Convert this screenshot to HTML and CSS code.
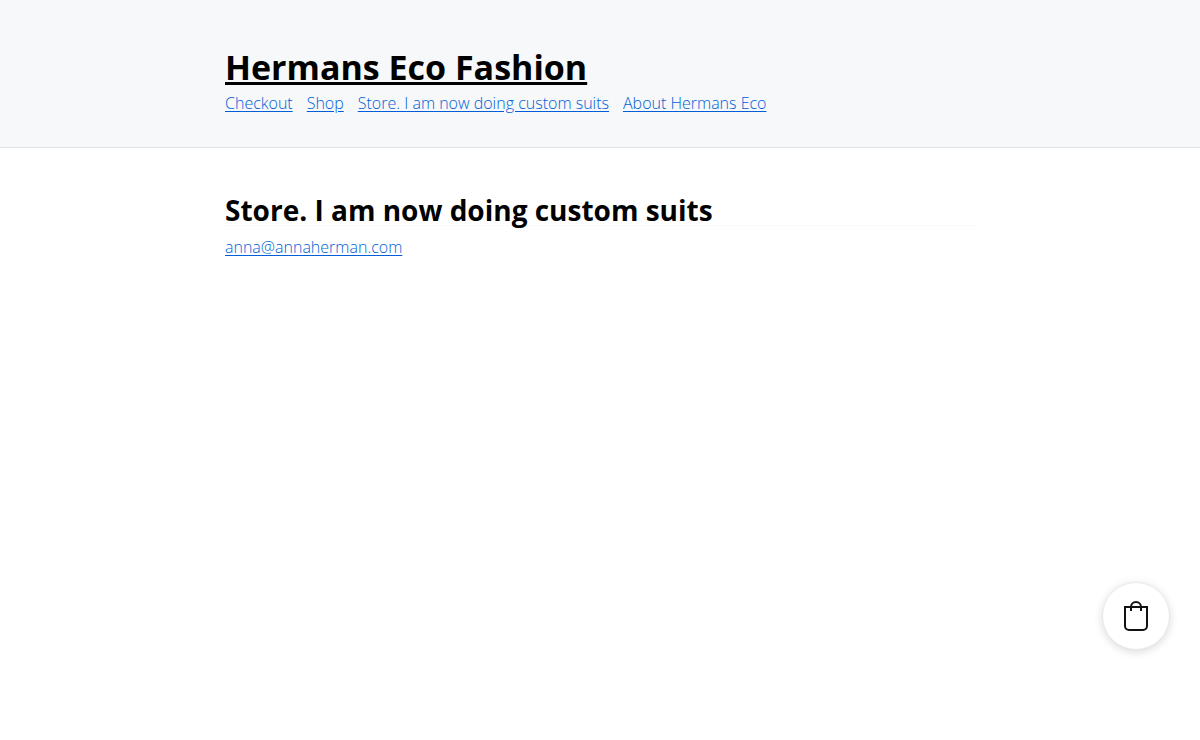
FILE: index.html
```html
<!DOCTYPE html>
<html lang="en">
<head>
  <meta charset="UTF-8">
  <title>Store. I am now doing custom suits - Hermans Eco Fashion</title>
  <meta name="viewport" content="width=device-width, initial-scale=1.0">
  <link rel="stylesheet" href="styles.css">
</head>
<body>
  <header class="site-header">
    <div class="container">
      <h1 class="site-title"><a href="#">Hermans Eco Fashion</a></h1>
      <nav class="site-nav">
        <a href="#">Checkout</a>
        <a href="#">Shop</a>
        <a href="#">Store. I am now doing custom suits</a>
        <a href="#">About Hermans Eco</a>
      </nav>
    </div>
  </header>

  <main class="container content">
    <h2 class="page-title">Store. I am now doing custom suits</h2>
    <p><a href="mailto:anna@annaherman.com">anna@annaherman.com</a></p>
  </main>

  <!-- Floating cart button -->
  <button class="cart-button" type="button" aria-label="Open cart">
    <svg width="26" height="32" viewBox="0 0 26 32" fill="none" stroke="#111" stroke-width="2">
      <path d="M2 7h22v19a4 4 0 0 1-4 4H6a4 4 0 0 1-4-4z"/>
      <path d="M8 11V7a5 5 0 0 1 10 0v4"/>
    </svg>
  </button>
</body>
</html>
```
FILE: styles.css
```css
* {
  box-sizing: border-box;
}

body {
  margin: 0;
  background: #fff;
  color: #000;
  font-family: "Open Sans", "Noto Sans", sans-serif;
  font-size: 16px;
  font-weight: 300;
  line-height: 24px;
}

a {
  color: #005fd8;
  text-underline-offset: 2px;
}

.container {
  max-width: 750px;
  margin: 0 auto;
}

.site-header {
  padding: 43px 0 32px;
  background: #f6f8f9;
  border-bottom: 1px solid #e1e4e6;
}

.site-title {
  margin: 0;
  font-size: 34px;
  font-weight: 700;
  line-height: 48px;
}

.site-title a {
  color: inherit;
  text-decoration-thickness: 3px;
}

.site-nav {
  display: flex;
  flex-wrap: wrap;
  gap: 0 14px;
}

.content {
  padding: 48px 0;
}

.page-title {
  margin: 0 0 9px;
  border-bottom: 1px solid #f9f9f9;
  font-size: 28px;
  font-weight: 700;
  line-height: 29px;
}

.content p {
  margin: 0;
}

.cart-button {
  position: fixed;
  right: 30px;
  bottom: 90px;
  display: flex;
  align-items: center;
  justify-content: center;
  width: 68px;
  height: 68px;
  padding: 0;
  border: 1px solid #e8e8e8;
  border-radius: 50%;
  background: #fff;
  box-shadow: 0 2px 8px rgba(0, 0, 0, 0.15);
  cursor: pointer;
}
```
